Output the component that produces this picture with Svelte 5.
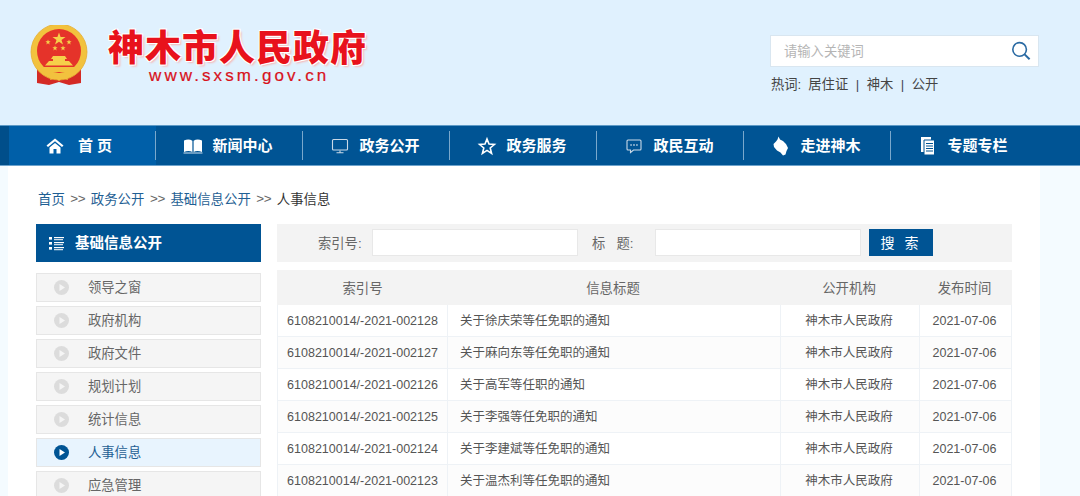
<script>
  const navs = [
    { label: '首 页', icon: 'home', active: true },
    { label: '新闻中心', icon: 'book' },
    { label: '政务公开', icon: 'monitor' },
    { label: '政务服务', icon: 'star' },
    { label: '政民互动', icon: 'chat' },
    { label: '走进神木', icon: 'map' },
    { label: '专题专栏', icon: 'doc' }
  ];
  const menu = ['领导之窗', '政府机构', '政府文件', '规划计划', '统计信息', '人事信息', '应急管理'];
  const rows = [
    ['002128', '关于徐庆荣等任免职的通知'],
    ['002127', '关于麻向东等任免职的通知'],
    ['002126', '关于高军等任职的通知'],
    ['002125', '关于李强等任免职的通知'],
    ['002124', '关于李建斌等任免职的通知'],
    ['002123', '关于温杰利等任免职的通知']
  ];
</script>

<div class="page">
  <header class="top">
    <div class="brand">
      <svg class="emblem" viewBox="0 0 60 62" width="60" height="62">
        <path d="M8 44 L8 58 L20 60 L30 57 L40 60 L52 58 L52 44 Z" fill="#d42a25" />
        <circle cx="30" cy="27" r="28" fill="#f2c23e" />
        <circle cx="30" cy="27" r="28" fill="none" stroke="#e6ad33" stroke-width="0.8" />
        <circle cx="30" cy="26" r="22" fill="#e5332a" />
        <polygon points="30,7.5 31.6,12.1 36.5,12.1 32.5,15 34,19.6 30,16.8 26,19.6 27.5,15 23.5,12.1 28.4,12.1" fill="#f6d04a" />
        <polygon points="19,14.5 19.7,16.3 21.6,16.3 20.1,17.5 20.6,19.4 19,18.3 17.4,19.4 17.9,17.5 16.4,16.3 18.3,16.3" fill="#f6d04a" />
        <polygon points="40,14.5 40.7,16.3 42.6,16.3 41.1,17.5 41.6,19.4 40,18.3 38.4,19.4 38.9,17.5 37.4,16.3 39.3,16.3" fill="#f6d04a" />
        <polygon points="26,20.5 26.7,22.3 28.6,22.3 27.1,23.5 27.6,25.4 26,24.3 24.4,25.4 24.9,23.5 23.4,22.3 25.3,22.3" fill="#f6d04a" />
        <polygon points="34,20.5 34.7,22.3 36.6,22.3 35.1,23.5 35.6,25.4 34,24.3 32.4,25.4 32.9,23.5 31.4,22.3 33.3,22.3" fill="#f6d04a" />
        <path d="M24 31 H36 L38 34 H36 V36 H40 L44 40.5 H16 L20 36 H24 V34 H22 Z" fill="#f6d04a" />
        <path d="M14 42 H46 L48 45 C42 49 36 47 30 47 C24 47 18 49 12 45 Z" fill="#f2c23e" />
        <path d="M19 50 C22 47 26 47 30 49 C34 47 38 47 41 50 L38 52 L39 55 L33 53 L30 56 L27 53 L21 55 L22 52 Z" fill="#f2c23e" />
      </svg>
      <div class="brand-text">
        <div class="name">神木市人民政府</div>
        <div class="url">www.sxsm.gov.cn</div>
      </div>
    </div>
    <div class="tools">
      <div class="search">
        <span class="ph">请输入关键词</span>
        <svg viewBox="0 0 20 20" width="20" height="20" fill="none" stroke="#2a6aa3" stroke-width="1.6"><circle cx="8.6" cy="8.4" r="6.8" /><path d="M13.6 13.4 L18.6 18.2" stroke-width="2" /></svg>
      </div>
      <div class="hot">
        <span>热词:</span><span class="w">居住证</span><i>|</i><span>神木</span><i>|</i><span>公开</span>
      </div>
    </div>
  </header>

  <nav class="nav">
    {#each navs as n, i}
      <div class="nav-item" class:active={n.active} class:last={i === navs.length - 1}>
        <svg class="ni" viewBox="0 0 20 20" width="20" height="20">
          {#if n.icon === 'home'}
            <path d="M1.5 9.5 L10 2.5 L18.5 9.5 L17 11 L10 5.3 L3 11 Z" fill="#fff" />
            <path d="M4.5 11.5 L10 7 L15.5 11.5 V17.5 H11.5 V13 H8.5 V17.5 H4.5 Z" fill="#fff" />
          {:else if n.icon === 'book'}
            <path d="M1 4.5 C4 3.2 7 3.2 9.4 4.8 V16 C7 14.8 4 14.8 1 16 Z M10.6 4.8 C13 3.2 16 3.2 19 4.5 V16 C16 14.8 13 14.8 10.6 16 Z" fill="#fff" />
            <path d="M0.5 17 H19.5" stroke="#cfe0ee" stroke-width="1" />
          {:else if n.icon === 'monitor'}
            <rect x="2.5" y="3.5" width="15" height="10.5" rx="1" fill="none" stroke="#c9d9e7" stroke-width="1.1" />
            <path d="M10 14.5 V16.5 M6.5 16.8 H13.5" stroke="#c9d9e7" stroke-width="1.1" />
          {:else if n.icon === 'star'}
            <path d="M10 3 L12 8.1 L17.4 8.5 L13.2 12 L14.6 17.4 L10 14.4 L5.4 17.4 L6.8 12 L2.6 8.5 L8 8.1 Z" fill="none" stroke="#fff" stroke-width="1.6" />
          {:else if n.icon === 'chat'}
            <path d="M4 4 H16 Q17 4 17 5 V13 Q17 14 16 14 H9.5 L6.5 16.5 V14 H4 Q3 14 3 13 V5 Q3 4 4 4 Z" fill="none" stroke="#c9d9e7" stroke-width="1.1" />
            <path d="M6.5 9 H7.6 M9.4 9 H10.6 M12.4 9 H13.5" stroke="#fff" stroke-width="1.4" />
          {:else if n.icon === 'map'}
            <path d="M7.5 0.5 L9 3.5 L12 5 L15 8 L17 12 L15.5 15 L14.5 18.5 L12 19.5 L9.5 16.5 L6 14.5 L3 11 L2.5 8 L5 5.5 L6.5 3.5 Z" fill="#fff" />
          {:else}
            <path d="M3 1 H13 V16 H3 Z" fill="#fff" />
            <path d="M6 4 H16.5 V19 H6 Z" fill="#fff" stroke="#005494" stroke-width="1" />
            <path d="M8 7.5 H15 M8 10 H15 M8 12.5 H15 M8 15 H15" stroke="#005494" stroke-width="1.1" />
          {/if}
        </svg>
        <span class="nl">{n.label}</span>
      </div>
    {/each}
  </nav>

  <main class="main">
    <div class="crumb">
      <a>首页</a><span>&gt;&gt;</span><a>政务公开</a><span>&gt;&gt;</span><a>基础信息公开</a><span>&gt;&gt;</span><b>人事信息</b>
    </div>
    <div class="cols">
      <aside class="side">
        <div class="side-title">
          <svg viewBox="0 0 15 15" width="15" height="15" fill="#fff">
            <rect x="0" y="1" width="3" height="2.6" /><rect x="0" y="6" width="3" height="2.6" /><rect x="0" y="11" width="3" height="2.6" />
            <rect x="5" y="1" width="10" height="1.2" /><rect x="5" y="3.2" width="9" height="1" /><rect x="5" y="6" width="10" height="1.2" /><rect x="5" y="8.2" width="9" height="1" /><rect x="5" y="11" width="10" height="1.2" /><rect x="5" y="13.2" width="9" height="1" />
          </svg>
          <span>基础信息公开</span>
        </div>
        {#each menu as m}
          <div class="mi" class:on={m === '人事信息'}>
            <svg viewBox="0 0 15 15" width="15" height="15">
              <circle cx="7.5" cy="7.5" r="7.5" class="dot" />
              <polygon points="5.5,4 11,7.5 5.5,11" fill={m === '人事信息' ? '#fff' : '#f5f5f5'} />
            </svg>
            <span>{m}</span>
          </div>
        {/each}
      </aside>

      <section class="content">
        <div class="filter">
          <label class="l1" for="a">索引号:</label>
          <input id="a" class="box" />
          <label class="l2" for="b">标&nbsp;&nbsp;&nbsp;题:</label>
          <input id="b" class="box" />
          <button class="btn">搜 索</button>
        </div>
        <table class="tb">
          <thead>
            <tr><th class="c1">索引号</th><th class="c2">信息标题</th><th class="c3">公开机构</th><th class="c4">发布时间</th></tr>
          </thead>
          <tbody>
            {#each rows as r}
              <tr>
                <td class="c1">6108210014/-2021-{r[0]}</td>
                <td class="c2 tl">{r[1]}</td>
                <td class="c3 cj">神木市人民政府</td>
                <td class="c4">2021-07-06</td>
              </tr>
            {/each}
          </tbody>
        </table>
      </section>
    </div>
  </main>
</div>

<style>
  :global(body) { margin: 0; }
  .page {
    width: 1080px; height: 496px; overflow: hidden; background: #f4fbff;
    font-family: "Liberation Sans", "Noto Sans CJK SC", sans-serif; color: #555;
  }
  .top {
    height: 125px; background: #e0f1fe; display: flex; justify-content: space-between; box-sizing: border-box;
  }
  .brand { display: flex; align-items: flex-start; padding: 25px 0 0 29px; }
  .emblem { display: block; }
  .brand-text { margin-left: 19px; }
  .name {
    font-family: "Noto Sans CJK SC", sans-serif; font-weight: 900; font-size: 36px; line-height: 44px; margin-top: -2px;
    letter-spacing: 1px; color: #e8121c; white-space: nowrap;
    text-shadow: 1px 1px 0 #fff, -1px -1px 0 #fff, 1px -1px 0 #fff, -1px 1px 0 #fff, 2px 2px 2px #f4b8b8;
  }
  .url {
    font-size: 17px; line-height: 20px; color: #d8121c; letter-spacing: 3.1px; margin: -1px 0 0 41px;
    white-space: nowrap; -webkit-text-stroke: 0.2px #d8121c;
  }
  .tools { width: 310px; padding-top: 35px; }
  .search {
    width: 269px; height: 32px; background: #fff; border: 1px solid #d9e6f0; box-sizing: border-box;
    display: flex; align-items: center; justify-content: space-between; padding: 0 7px 0 13px;
  }
  .ph { font-size: 13.3px; color: #b5b5b5; margin-top: -2px; }
  .hot { margin-top: 8px; padding-left: 1px; font-size: 13.3px; line-height: 20px; color: #444; display: flex; }
  .hot .w { margin-left: 7px; }
  .hot i { font-style: normal; margin: 0 7.5px; color: #445; }
  .nav {
    height: 41px; background: #005494; display: flex; padding-left: 9px;
    border-top: 1px solid #5e9ac6; border-bottom: 1px solid #6ea3cc; box-sizing: border-box;
    box-shadow: inset 9px 0 0 #004e8a;
  }
  .nav-item {
    width: 147px; display: flex; align-items: center; justify-content: center; gap: 9px; position: relative;
    color: #fff; font-weight: 700; font-size: 15px; flex: none; padding-right: 3px; box-sizing: border-box;
  }
  .nav-item.active { background: #005fa8; gap: 13px; padding-right: 8px; }
  .nav-item::after {
    content: ""; position: absolute; right: 0; top: 5px; bottom: 5px; width: 1px; background: #7aa8cc;
  }
  .nav-item.last::after { display: none; }
  .ni { flex: none; }
  .nl { white-space: nowrap; margin-top: -2px; }
  .main {
    margin: 0 40px 0 8px; background: #fff; height: 330px; padding: 0 28px 0 28px;
  }
  .crumb { height: 58px; display: flex; align-items: center; font-size: 13.4px; padding: 6px 0 0 2px; box-sizing: border-box; }
  .crumb a { color: #1f5f94; }
  .crumb span { margin: 0 5.5px; color: #666; letter-spacing: -0.3px; }
  .crumb b { font-weight: 400; color: #333; }
  .cols { display: flex; gap: 16px; align-items: flex-start; }
  .side { width: 225px; flex: none; }
  .side-title {
    height: 38px; background: #005494; color: #fff; font-size: 14.5px; font-weight: 700;
    display: flex; align-items: center; gap: 11px; padding-left: 13px; box-sizing: border-box; margin-bottom: 11px;
  }
  .side-title span { margin-top: -3px; }
  .mi {
    height: 29px; box-sizing: border-box; border: 1px solid #e6e6e6; background: #f5f5f5; margin-bottom: 4px;
    display: flex; align-items: center; padding-left: 17px; font-size: 13.3px; color: #666;
  }
  .mi span { margin-left: 19px; margin-top: -2px; }
  .dot { fill: #dcdcdc; }
  .mi.on { background: #e8f4fe; color: #1f5f94; }
  .mi.on .dot { fill: #005494; }
  .content { width: 735px; flex: none; }
  .filter {
    height: 38px; background: #f3f3f3; display: flex; align-items: center; font-size: 13.3px; color: #666;
  }
  .l1 { margin-left: 41px; width: 54px; white-space: nowrap; margin-top: -2px; }
  .l2 { margin-left: 14px; width: 63px; white-space: nowrap; margin-top: -2px; }
  .box {
    width: 206px; height: 27px; margin-top: -1px; background: #fff; border: 1px solid #e8e8e8; box-sizing: border-box; padding: 0; outline: none;
  }
  .btn {
    width: 64px; height: 27px; margin-left: 8px; margin-top: -1px; background: #005494; color: #fff; border: 0; padding: 0 0 2px;
    font: 14px "Liberation Sans", "Noto Sans CJK SC", sans-serif; letter-spacing: 3px;
  }
  .tb {
    margin-top: 8px; width: 735px; border-collapse: separate; border-spacing: 0; table-layout: fixed; font-size: 12.5px; color: #555;
  }
  .tb th { height: 35px; padding: 0 0 2px; box-sizing: border-box; background: #f3f3f3; font-weight: 400; font-size: 13.4px; color: #666; }
  .tb td {
    height: 32px; padding: 0; text-align: center; border-right: 1px solid #eef2f6; border-bottom: 1px solid #eef2f6; box-sizing: border-box; white-space: nowrap;
  }
  .tb td:first-child { border-left: 1px solid #eef2f6; }
  .tb tbody tr:nth-child(even) td { background: #fcfcfc; }
  .tb td.tl { text-align: left; padding-left: 12px; padding-bottom: 2px; }
  .tb td.cj { padding-bottom: 2px; padding-right: 2px; }
  .tb td.c4 { padding-right: 2px; }
  .tb th.c2, .tb th.c3, .tb th.c4 { padding-right: 3px; }
  .c1 { width: 171px; }
  .c3 { width: 139px; }
  .c4 { width: 92px; }
</style>
